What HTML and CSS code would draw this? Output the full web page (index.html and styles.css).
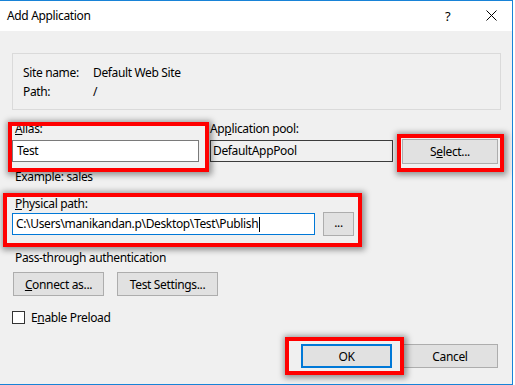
FILE: index.html
```html
<!DOCTYPE html>
<html>
<head>
<meta charset="utf-8">
<link rel="stylesheet" href="styles.css">
</head>
<body>
<div class="window">
  <div class="titlebar">
    <span class="title">Add Application</span>
    <span class="help">?</span>
    <span class="close">
      <svg width="11" height="11" viewBox="0 0 11 11"><path d="M0.5 0.5 L10.5 10.5 M10.5 0.5 L0.5 10.5" stroke="#000" stroke-width="1" fill="none"/></svg>
    </span>
  </div>
  <div class="content">
    <div class="group">
      <div class="info-row"><span class="info-label">Site name:</span><span>Default Web Site</span></div>
      <div class="info-row"><span class="info-label">Path:</span><span>/</span></div>
    </div>

    <div class="alias-row">
      <div class="col alias-col">
        <div class="label indent"><u>A</u>lias:</div>
        <div class="textbox">Test</div>
      </div>
      <div class="col pool-col">
        <div class="label">Ap<u>p</u>lication pool:</div>
        <div class="textbox readonly">DefaultAppPool</div>
      </div>
      <div class="btn select-btn">S<u>e</u>lect...</div>
    </div>
    <div class="hint">Example: sales</div>

    <div class="label indent path-label"><u>P</u>hysical path:</div>
    <div class="path-row">
      <div class="textbox focused path-box">C:\Users\manikandan.p\Desktop\Test\Publish<span class="caret"></span></div>
      <div class="btn dots-btn">...</div>
    </div>

    <div class="label indent pass-label">Pass-through authentication</div>
    <div class="auth-row">
      <div class="btn connect-btn"><u>C</u>onnect as...</div>
      <div class="btn test-btn">Test Settings...</div>
    </div>

    <div class="check-row">
      <span class="checkbox"></span>
      <span>E<u>n</u>able Preload</span>
    </div>

    <div class="footer">
      <div class="btn ok-btn">OK</div>
      <div class="btn cancel-btn">Cancel</div>
    </div>

    <div class="mark mark-alias"></div>
    <div class="mark mark-select"></div>
    <div class="mark mark-path"></div>
    <div class="mark mark-ok"></div>
  </div>
</div>
</body>
</html>
```

FILE: styles.css
```css
* { box-sizing: border-box; }
html, body {
  margin: 0;
  padding: 0;
  background: #ffffff;
}
body {
  width: 515px;
  height: 385px;
  overflow: hidden;
  font-family: "Noto Sans", "Open Sans", "Liberation Sans", sans-serif;
  font-size: 12px;
  letter-spacing: -0.35px;
  color: #000;
}
.window {
  width: 513px;
  height: 385px;
  border-top: 1px solid #1883d7;
  border-right: 1px solid #1883d7;
  border-bottom: 1px solid #1883d7;
  display: flex;
  flex-direction: column;
  background: #f0f0f0;
}
.titlebar {
  height: 30px;
  flex: none;
  background: #ffffff;
  display: flex;
  align-items: center;
  padding-left: 7px;
}
.title {
  flex: 1;
  font-size: 12px;
  line-height: 16px;
  margin-top: -1px;
}
.help {
  width: 12px;
  font-size: 13px;
  line-height: 16px;
  margin-right: 29px;
  margin-top: -1px;
}
.close {
  display: flex;
  width: 11px;
  height: 11px;
  margin-right: 15px;
  margin-top: -1px;
}
.content {
  position: relative;
  flex: 1;
  padding-top: 22px;
}
.group {
  margin-left: 12px;
  width: 489px;
  height: 57px;
  border: 1px solid #dadada;
  padding: 9px 0 0 10px;
}
.info-row {
  display: flex;
  line-height: 19px;
  height: 19px;
}
.info-label {
  width: 70px;
}
.label {
  line-height: 16px;
  height: 16px;
  white-space: nowrap;
}
.indent { padding-left: 3px; }
.alias-row {
  display: flex;
  margin-top: 11px;
  margin-left: 12px;
}
.col {
  display: flex;
  flex-direction: column;
}
.alias-col { width: 187px; }
.pool-col { width: 183px; margin-left: 11px; }
.col .label { margin-bottom: 3px; }
.textbox {
  height: 22px;
  border: 1px solid #7a7a7a;
  background: #fff;
  line-height: 20px;
  padding-left: 3px;
  white-space: nowrap;
  display: flex;
  align-items: center;
}
.alias-col .textbox { padding-left: 4px; }
.readonly {
  background: #f0f0f0;
  border-color: #3c3c3c;
  padding-left: 2px;
}
.focused {
  border-color: #0078d7;
}
.caret {
  display: inline-block;
  width: 1px;
  height: 15px;
  background: #000;
  margin-left: 1px;
}
.btn {
  border: 1px solid #adadad;
  background: #e1e1e1;
  display: flex;
  align-items: center;
  justify-content: center;
  white-space: nowrap;
}
.select-btn {
  width: 96px;
  height: 25px;
  margin-top: 18px;
  margin-left: 9px;
}
.hint {
  margin-top: 5px;
  margin-left: 15px;
  line-height: 16px;
  height: 16px;
}
.path-label {
  margin-top: 11px;
  margin-left: 12px;
}
.path-row {
  display: flex;
  align-items: center;
  margin-top: 0px;
  margin-left: 12px;
  height: 24px;
}
.path-box {
  width: 303px;
}
.dots-btn {
  width: 31px;
  height: 24px;
  margin-left: 8px;
  padding-bottom: 4px;
}
.pass-label {
  margin-top: 14px;
  margin-left: 12px;
}
.auth-row {
  display: flex;
  margin-top: 6px;
  margin-left: 13px;
  gap: 13px;
}
.auth-row .btn { height: 24px; }
.connect-btn { width: 91px; }
.test-btn { width: 101px; }
.check-row {
  display: flex;
  align-items: center;
  margin-top: 13px;
  margin-left: 12px;
  height: 16px;
  gap: 6px;
}
.checkbox {
  width: 13px;
  height: 13px;
  border: 1px solid #333;
  background: #fff;
}
.footer {
  display: flex;
  justify-content: flex-end;
  gap: 10px;
  margin-top: 19px;
  margin-right: 14px;
}
.footer .btn { height: 24px; }
.ok-btn {
  width: 91px;
  border: 2px solid #0078d7;
}
.cancel-btn { width: 96px; }

.mark {
  position: absolute;
  border: 4px solid #ff0000;
  box-shadow: 1px 1px 6px 2px rgba(0, 0, 0, 0.4);
}
.mark-alias { left: 8px; top: 91px; width: 201px; height: 50px; }
.mark-select { left: 397px; top: 103px; width: 107px; height: 38px; }
.mark-path { left: 3px; top: 162px; width: 359px; height: 54px; }
.mark-ok { left: 285px; top: 306px; width: 119px; height: 38px; }
```
